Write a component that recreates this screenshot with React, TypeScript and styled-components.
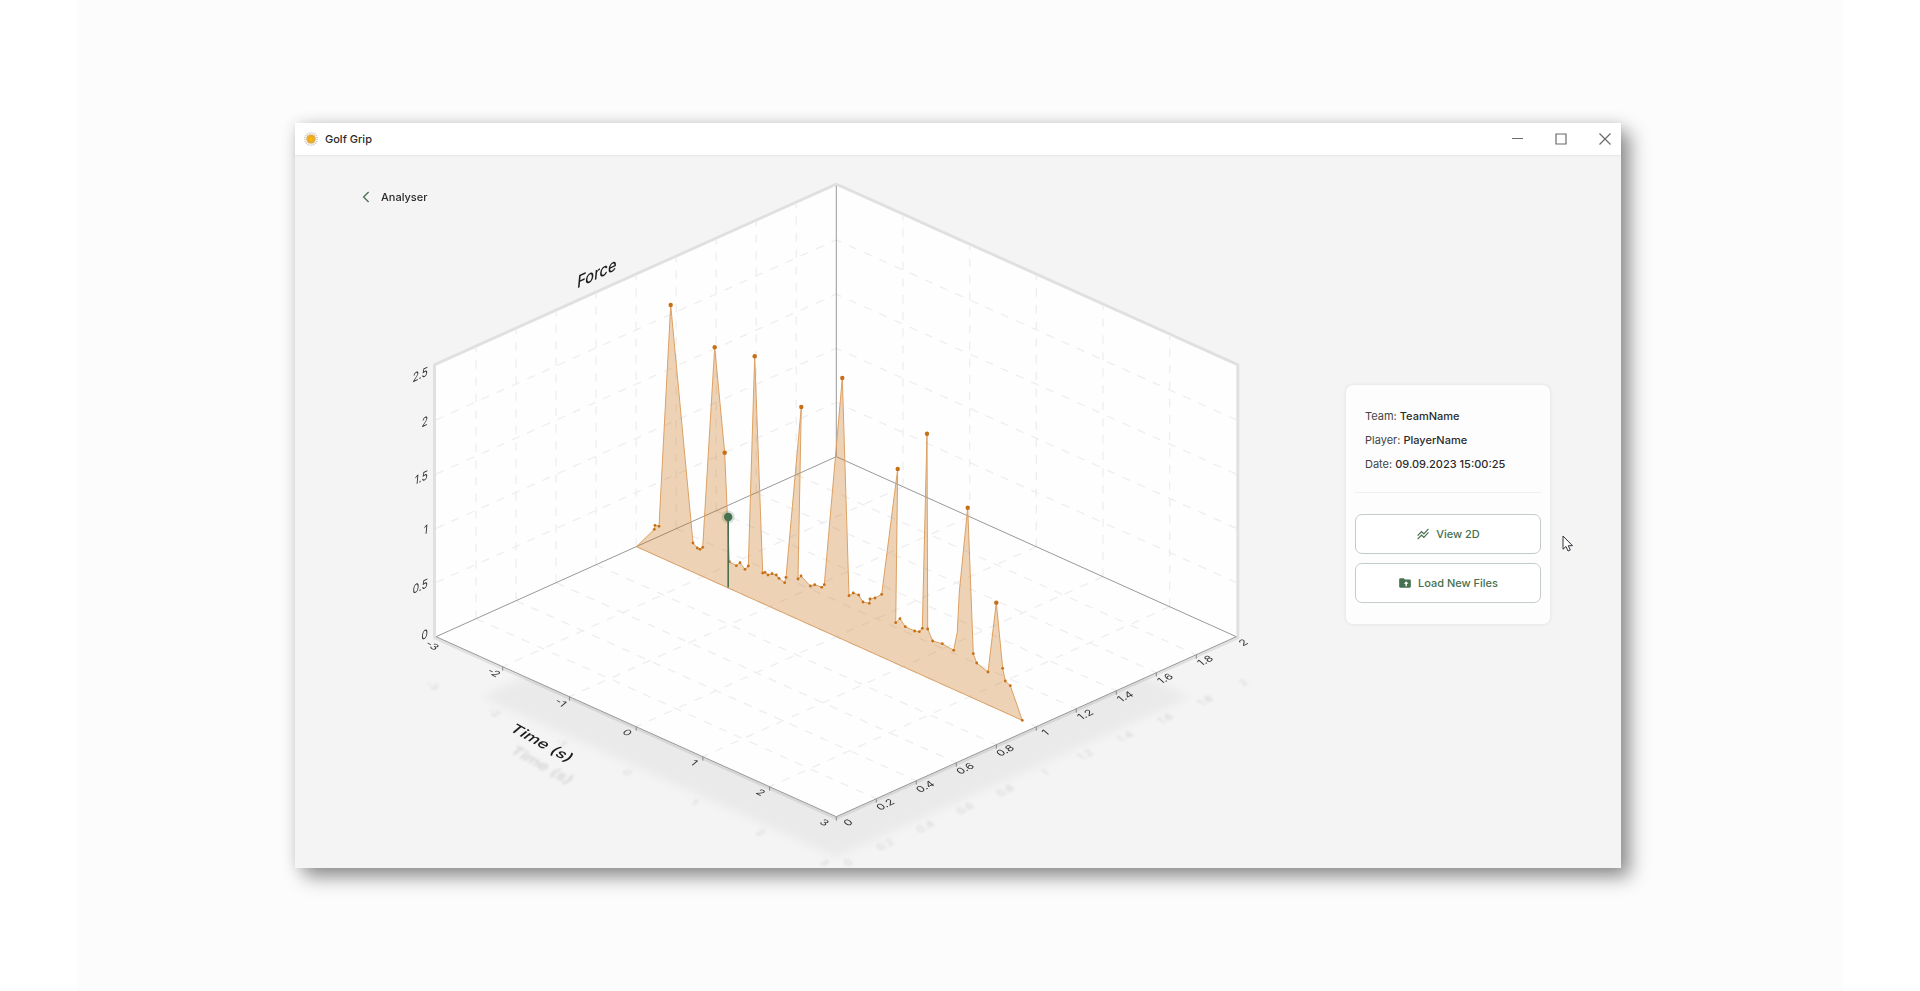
import React from 'react';
import styled, { createGlobalStyle } from 'styled-components';
import { MdStackedLineChart } from 'react-icons/md';

const GlobalStyle = createGlobalStyle`
  * { box-sizing: border-box; }
  body {
    margin: 0;
    background: #ffffff;
    font-family: Inter, "Liberation Sans", sans-serif;
    color: #2b2b2b;
  }
`;

const Stage = styled.div`
  min-height: 100vh;
  margin: 0 78px;
  padding: 123px 221px 123px 217px;
  background: #fcfcfc;
`;

const AppWindow = styled.main`
  background: #f4f4f4;
  box-shadow: 9px 9px 18px rgba(0, 0, 0, 0.42), 0 0 14px rgba(0, 0, 0, 0.1);
`;

const TitleBar = styled.header`
  display: flex;
  align-items: center;
  height: 32px;
  padding-left: 8px;
  background: #ffffff;
  box-shadow: 0 1px 2px rgba(0, 0, 0, 0.06);
`;

const Title = styled.h1`
  flex: 1;
  margin: 0 0 0 6px;
  font-size: 11px;
  font-weight: 500;
  line-height: 16px;
`;

const WindowControls = styled.div`
  display: flex;
  gap: 12px;
`;

const ControlButton = styled.button`
  display: grid;
  place-items: center;
  width: 32px;
  height: 32px;
  padding: 0;
  border: 0;
  background: transparent;
  color: #6a6a6a;
`;

const Content = styled.section`
  position: relative;
  display: grid;
  grid-template-columns: 1fr 206px;
  padding-right: 70px;
`;

const BackLink = styled.a`
  grid-area: 1 / 1;
  z-index: 1;
  display: flex;
  align-items: center;
  align-self: start;
  justify-self: start;
  gap: 11px;
  margin: 34px 0 0 67px;
  color: #2b2b2b;
  font-size: 11px;
  font-weight: 500;
  line-height: 16px;
  text-decoration: none;
`;

const Chart = styled.svg`
  grid-area: 1 / 1;
  display: block;
  width: 100%;
  overflow: visible;
  font-family: Inter, "Liberation Sans", sans-serif;
`;

const Card = styled.aside`
  grid-area: 1 / 2;
  align-self: center;
  margin-bottom: 14px;
  padding: 19px 9px 21px;
  border: 1px solid #ececec;
  border-radius: 8px;
  background: #fdfdfd;
  box-shadow: 0 0 3px rgba(0, 0, 0, 0.06);
`;

const Details = styled.dl`
  margin: 0 0 21px;
  padding: 0 10px 16px;
  border-bottom: 1px solid #f0f0f0;
`;

const Detail = styled.div`
  display: flex;
  gap: 3px;
  font-size: 11px;
  line-height: 24px;

  dt { color: #444444; }
  dd { margin: 0; font-weight: 500; }
`;

const Actions = styled.div`
  display: grid;
  gap: 9px;
`;

const ActionButton = styled.button`
  display: flex;
  align-items: center;
  justify-content: center;
  gap: 6px;
  height: 40px;
  padding: 0;
  border: 1px solid #c3cdc6;
  border-radius: 7px;
  background: #ffffff;
  color: #47704f;
  font-family: inherit;
  font-size: 11px;
  font-weight: 500;
`;

const Pointer = styled.svg`
  position: absolute;
  right: 47px;
  top: 380px;
`;

type Point = [number, number];

const LEFT: Point = [436, 636.7];
const FRONT: Point = [836.3, 816.7];
const RIGHT: Point = [1236.3, 636.7];
const BACK: Point = [836.3, 456.7];
const HEIGHT = 271;

const mix = (a: Point, b: Point, t: number): Point => [a[0] + (b[0] - a[0]) * t, a[1] + (b[1] - a[1]) * t];
const raise = (p: Point, h: number): Point => [p[0], p[1] - h];
const join = (points: Point[]) => points.map((p) => p.join(',')).join(' ');
const segment = (a: Point, b: Point) => `M${a[0]} ${a[1]}L${b[0]} ${b[1]}`;

const TIME = ['-3', '-2', '-1', '0', '1', '2', '3'];
const DEPTH = ['0', '0.2', '0.4', '0.6', '0.8', '1', '1.2', '1.4', '1.6', '1.8', '2'];
const FORCE = ['0', '0.5', '1', '1.5', '2', '2.5'];

const OUTLINE = join([raise(LEFT, HEIGHT), raise(BACK, HEIGHT), raise(RIGHT, HEIGHT), RIGHT, FRONT, LEFT]);

const GRID = [
  ...[1, 2, 3, 4, 5].flatMap((i) => {
    const t = i / 6;
    return [
      segment(mix(BACK, RIGHT, t), mix(LEFT, FRONT, t)),
      segment(mix(BACK, RIGHT, t), raise(mix(BACK, RIGHT, t), HEIGHT)),
    ];
  }),
  ...[1, 2, 3, 4, 5, 6, 7, 8, 9].flatMap((i) => {
    const t = i / 10;
    return [
      segment(mix(LEFT, BACK, t), mix(FRONT, RIGHT, t)),
      segment(mix(LEFT, BACK, t), raise(mix(LEFT, BACK, t), HEIGHT)),
    ];
  }),
  ...[1, 2, 3, 4].flatMap((i) => {
    const h = (HEIGHT * i) / 5;
    return [segment(raise(LEFT, h), raise(BACK, h)), segment(raise(RIGHT, h), raise(BACK, h))];
  }),
].join('');

const TICKS = [
  ...[1, 2, 3, 4, 5, 6].map((i) => mix(LEFT, FRONT, i / 6)),
  ...[1, 2, 3, 4, 5, 6, 7, 8, 9].map((i) => mix(FRONT, RIGHT, i / 10)),
]
  .map((p) => segment(p, raise(p, -4)))
  .join('');

const START: Point = [636.5, 546.7];

const SAMPLES: Point[] = [
  [654.3, 529.3], [655, 525.3], [659, 526.3], [693, 543], [697.3, 548], [700, 549.3], [702.7, 547.3],
  [729.3, 561.7], [736.3, 565.7], [740, 562.7], [745, 569.3], [748.3, 566], [762.7, 573], [765, 572.3],
  [768, 575], [772, 573.7], [776.3, 575], [779, 578.3], [784.7, 582.7], [786, 577.3], [798, 579],
  [801, 576], [810.3, 586], [814.7, 584.7], [821.7, 587.3], [824.3, 584.7], [849, 595.7], [853.3, 593],
  [858.7, 595], [863, 602], [869.3, 603.3], [870, 599], [875, 598], [881.7, 594.3], [895.7, 622.7],
  [900, 618.7], [905.3, 626.7], [914.7, 631], [919.3, 631.7], [922.3, 628.3], [927.7, 629], [932.7, 641],
  [942.3, 643.7], [953.7, 650.3], [973.3, 653.7], [976.7, 663], [988, 672], [1002.7, 668.3],
  [1005.3, 681], [1010.3, 685.7], [1022.3, 720.3],
];

/* Each peak follows the sample with the given index. */
const PEAKS: Record<number, Point[]> = {
  2: [[670.7, 305]],
  6: [[714.7, 347.3], [724.7, 452.7]],
  11: [[754.7, 356.3]],
  19: [[801.3, 407]],
  25: [[842.3, 378]],
  33: [[897.7, 469]],
  39: [[927, 433.7]],
  43: [[967.7, 507.7]],
  46: [[996.3, 602.7]],
};

const PROFILE: Point[] = [
  START,
  ...SAMPLES.flatMap((p, i) => {
    const bend: Point[] = i === 43 ? [[957.3, 632], [959.3, 592]] : [];
    return [p, ...bend, ...(PEAKS[i] || [])];
  }),
];

const TIME_PLANE = '0.84 0.46 -0.62 0.52';
const DEPTH_PLANE = '0.84 -0.44 0.62 0.56';
const FORCE_PLANE = '0.86 -0.4 -0.1 1.04';

type PlaneTextProps = {
  plane: string;
  at: Point;
  anchor?: 'start' | 'middle' | 'end';
  size?: number;
  weight?: number;
  children: string;
};

const PlaneText = ({ plane, at, anchor = 'middle', size = 12, weight = 400, children }: PlaneTextProps) => (
  <text
    transform={`matrix(${plane} ${at[0]} ${at[1]})`}
    textAnchor={anchor}
    dominantBaseline="central"
    fontSize={size}
    fontWeight={weight}
  >
    {children}
  </text>
);

/* The corner labels are nudged along their axis so that they do not collide. */
const FloorLabels = () => (
  <g>
    {TIME.map((label, i) => {
      const p = mix(LEFT, FRONT, i / 6);
      const dx = i === 0 ? -4 : i === 6 ? -12 : -9;
      return <PlaneText key={label} plane={TIME_PLANE} at={[p[0] + dx, p[1] + (i === 0 ? 9 : 6)]}>{label}</PlaneText>;
    })}
    {DEPTH.map((label, i) => {
      const p = mix(FRONT, RIGHT, i / 10);
      const dx = i === 0 ? 12 : i === 10 ? 7 : 9;
      return <PlaneText key={label} plane={DEPTH_PLANE} at={[p[0] + dx, p[1] + 6]}>{label}</PlaneText>;
    })}
  </g>
);

const ForceChart = () => (
  <Chart viewBox="295 155 1050 713" role="img" aria-label="Force over time, 3D view">
    <defs>
      <filter id="soft" x="-10%" y="-10%" width="120%" height="120%">
        <feGaussianBlur stdDeviation="5" />
      </filter>
      <filter id="faint" x="-10%" y="-30%" width="120%" height="160%">
        <feGaussianBlur stdDeviation="1.6" />
      </filter>
    </defs>
    <polygon points="482,697 836,857 1190,697 836,537" fill="#eaeaea" filter="url(#soft)" />
    <g fill="#000000" opacity="0.15" filter="url(#faint)" aria-hidden="true">
      <g transform="translate(0 40)"><FloorLabels /></g>
      <PlaneText plane={TIME_PLANE} at={[542, 765]} size={18} weight={500}>Time (s)</PlaneText>
    </g>
    <polygon points={OUTLINE} fill="none" stroke="#000000" strokeOpacity="0.08" strokeWidth="6" />
    <polygon points={OUTLINE} fill="#fefefe" />
    <path d={GRID} fill="none" stroke="#eeeeee" strokeWidth="1.3" strokeDasharray="8.33 8.33" />
    <path
      d={segment(raise(BACK, HEIGHT), BACK) + segment(LEFT, BACK) + segment(BACK, RIGHT) + segment(LEFT, FRONT) + segment(FRONT, RIGHT)}
      stroke="#999999"
      strokeWidth="1"
    />
    <path d={TICKS} stroke="#8a8a8a" strokeWidth="1" />
    <polygon points={join(PROFILE)} fill="#c76d0c" fillOpacity="0.3" stroke="#dca163" strokeWidth="1" strokeLinejoin="round" />
    <g fill="#c76f14">
      {SAMPLES.map((p) => <circle key={p.join()} cx={p[0]} cy={p[1]} r="1.4" />)}
      {Object.values(PEAKS).flat().map((p) => <circle key={p.join()} cx={p[0]} cy={p[1]} r="2.2" />)}
    </g>
    <path d="M728.2 517V587.5" stroke="#47704f" strokeWidth="1.6" />
    <circle cx="728.2" cy="517" r="6.5" fill="#47704f" fillOpacity="0.2" />
    <circle cx="728.2" cy="517" r="4.2" fill="#47704f" />
    <g fill="#333333">
      <FloorLabels />
      {FORCE.map((label, i) => {
        const edge = i === 0 ? -4 : i === 5 ? 5 : 0;
        return (
          <PlaneText key={label} plane={FORCE_PLANE} anchor="end" at={[428, LEFT[1] - (HEIGHT * i) / 5 + edge]}>
            {label}
          </PlaneText>
        );
      })}
    </g>
    <g fill="#1c1c1c">
      <PlaneText plane={FORCE_PLANE} at={[597, 273]} size={17} weight={500}>Force</PlaneText>
      <PlaneText plane={TIME_PLANE} at={[542, 743]} size={18} weight={500}>Time (s)</PlaneText>
    </g>
  </Chart>
);

const Logo = () => (
  <svg width="16" height="16" viewBox="0 0 16 16" aria-hidden="true">
    <defs>
      <radialGradient id="sun">
        <stop offset="0" stopColor="#fdc400" />
        <stop offset="0.6" stopColor="#eda621" />
        <stop offset="1" stopColor="#d9b777" />
      </radialGradient>
    </defs>
    <circle cx="8" cy="8" r="6.2" fill="none" stroke="#c9c3b8" strokeWidth="1.6" strokeDasharray="1 1" />
    <circle cx="8" cy="8" r="4.8" fill="url(#sun)" />
  </svg>
);

const FolderUpload = () => (
  <svg width="14" height="14" viewBox="0 0 24 24" aria-hidden="true">
    <path d="M10 4H4a2 2 0 0 0-2 2v12c0 1.1.9 2 2 2h16a2 2 0 0 0 2-2V8a2 2 0 0 0-2-2h-8z" fill="currentColor" />
    <path d="M14 9.2l4 4.2h-2.8V17.400h-2.400v-4H10z" fill="#ffffff" />
  </svg>
);

const DETAILS = [
  ['Team:', 'TeamName'],
  ['Player:', 'PlayerName'],
  ['Date:', '09.09.2023 15:00:25'],
];

export default function App() {
  return (
    <>
      <GlobalStyle />
      <Stage>
        <AppWindow>
          <TitleBar>
            <Logo />
            <Title>Golf Grip</Title>
            <WindowControls>
              <ControlButton aria-label="Minimise">
                <svg width="12" height="12" viewBox="0 0 12 12"><path d="M1 5.5h11" stroke="currentColor" /></svg>
              </ControlButton>
              <ControlButton aria-label="Maximise">
                <svg width="12" height="12" viewBox="0 0 12 12" fill="none"><path d="M1 1h10v10H1z" stroke="currentColor" strokeWidth="1.2" /></svg>
              </ControlButton>
              <ControlButton aria-label="Close">
                <svg width="12" height="12" viewBox="0 0 12 12"><path d="M.5.5l11 11M11.5.5l-11 11" stroke="currentColor" strokeWidth="1.2" /></svg>
              </ControlButton>
            </WindowControls>
          </TitleBar>
          <Content>
            <BackLink href="#analyser">
              <svg width="8" height="12" viewBox="0 0 8 12" fill="none" aria-hidden="true">
                <path d="M6.600 1L1.600 6l5 5" stroke="#47704f" strokeWidth="1.3" />
              </svg>
              Analyser
            </BackLink>
            <ForceChart />
            <Card>
              <Details>
                {DETAILS.map(([name, value]) => (
                  <Detail key={name}>
                    <dt>{name}</dt>
                    <dd>{value}</dd>
                  </Detail>
                ))}
              </Details>
              <Actions>
                <ActionButton><MdStackedLineChart size={14} />View 2D</ActionButton>
                <ActionButton><FolderUpload />Load New Files</ActionButton>
              </Actions>
            </Card>
            <Pointer width="12" height="18" viewBox="0 0 12 18" aria-hidden="true">
              <path d="M1 1v13.2l3-2.7 2 4.5 2.300-1-2-4.300h4.200z" fill="#ffffff" stroke="#33333d" strokeWidth="1" />
            </Pointer>
          </Content>
        </AppWindow>
      </Stage>
    </>
  );
}
